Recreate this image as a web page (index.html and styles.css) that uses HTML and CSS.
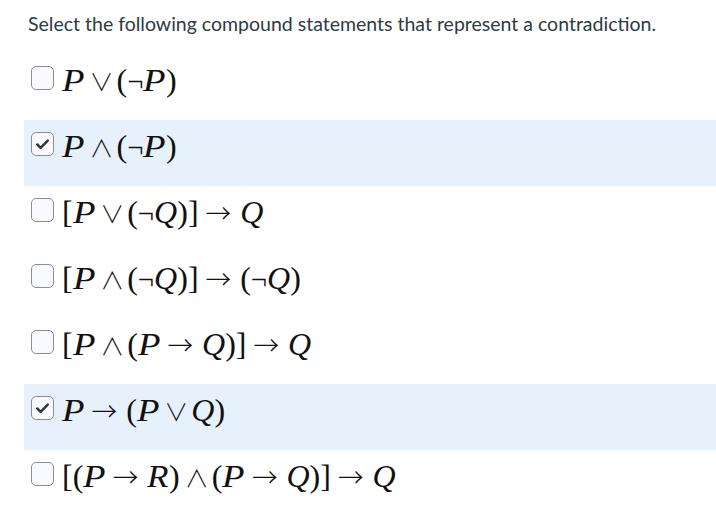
FILE: index.html
```html
<!DOCTYPE html>
<html>
<head>
<meta charset="utf-8">
<link rel="stylesheet" href="styles.css">
</head>
<body>
<p class="prompt">Select the following compound statements that represent a contradiction.</p>
<div class="options">
  <div class="opt"><span class="box"></span><span class="math"><i class="vp">P</i><span class="bin">∨</span>(<span class="neg">¬</span><i class="vp">P</i>)</span></div>
  <div class="opt sel"><span class="box"><svg viewBox="0 0 22 22" width="22" height="22"><path d="M5.5 11.5 L9 15 L16.5 7.5" fill="none" stroke="#333" stroke-width="2.6" stroke-linecap="round" stroke-linejoin="round"/></svg></span><span class="math"><i class="vp">P</i><span class="bin">∧</span>(<span class="neg">¬</span><i class="vp">P</i>)</span></div>
  <div class="opt"><span class="box"></span><span class="math">[<i class="vp">P</i><span class="bin">∨</span>(<span class="neg">¬</span><i class="vq">Q</i>)]<span class="rel">→</span><i class="vq">Q</i></span></div>
  <div class="opt"><span class="box"></span><span class="math">[<i class="vp">P</i><span class="bin">∧</span>(<span class="neg">¬</span><i class="vq">Q</i>)]<span class="rel">→</span>(<span class="neg">¬</span><i class="vq">Q</i>)</span></div>
  <div class="opt"><span class="box"></span><span class="math">[<i class="vp">P</i><span class="bin">∧</span>(<i class="vp">P</i><span class="rel">→</span><i class="vq">Q</i>)]<span class="rel">→</span><i class="vq">Q</i></span></div>
  <div class="opt sel"><span class="box"><svg viewBox="0 0 22 22" width="22" height="22"><path d="M5.5 11.5 L9 15 L16.5 7.5" fill="none" stroke="#333" stroke-width="2.6" stroke-linecap="round" stroke-linejoin="round"/></svg></span><span class="math"><i class="vp">P</i><span class="rel">→</span>(<i class="vp">P</i><span class="bin">∨</span><i class="vq">Q</i>)</span></div>
  <div class="opt"><span class="box"></span><span class="math">[(<i class="vp">P</i><span class="rel">→</span><i class="vr">R</i>)<span class="bin">∧</span>(<i class="vp">P</i><span class="rel">→</span><i class="vq">Q</i>)]<span class="rel">→</span><i class="vq">Q</i></span></div>
</div>
</body>
</html>
```
FILE: styles.css
```css
html, body {
  margin: 0;
  padding: 0;
  background: #ffffff;
}
body {
  font-family: Lato, "Liberation Sans", sans-serif;
  color: #2d3b45;
  width: 716px;
  overflow: hidden;
}
.prompt {
  margin: 0;
  padding: 12px 0 0 28px;
  font-size: 19.5px;
  line-height: 24px;
  height: 42px;
}
.options {
  margin-left: 24px;
}
.opt {
  height: 66px;
  box-sizing: border-box;
  padding: 12px 0 0 7px;
  display: flex;
  align-items: flex-start;
  gap: 8px;
}
.opt.sel {
  background: #e6f1fc;
}
.box {
  width: 23px;
  height: 24px;
  box-sizing: border-box;
  border: 1.5px solid #8a8f94;
  border-radius: 5px;
  background: #f8faff;
  display: flex;
  align-items: center;
  justify-content: center;
  flex-shrink: 0;
}
.box svg {
  display: block;
}
.math {
  font-family: "Liberation Serif", "DejaVu Serif", serif;
  font-size: 32px;
  line-height: 28px;
  color: #111;
  white-space: nowrap;
}
.math i {
  font-style: italic;
  display: inline-block;
  transform-origin: left center;
}
.vp {
  transform: scaleX(1.15);
  margin-right: 3px;
}
.vq {
  margin-right: 0;
}
.vr {
  transform: scaleX(1.1);
  margin-right: 2px;
}
.neg {
  font-size: 0.9em;
}
.bin {
  display: inline-block;
  margin: 0 3px 0 5px;
  font-family: "Noto Sans CJK JP", sans-serif;
  font-weight: 300;
  font-size: 0.75em;
}
.rel {
  display: inline-block;
  margin: 0 9px 0 7px;
  font-family: "Noto Sans CJK JP", sans-serif;
  font-weight: 300;
  font-size: 0.8em;
}
```
